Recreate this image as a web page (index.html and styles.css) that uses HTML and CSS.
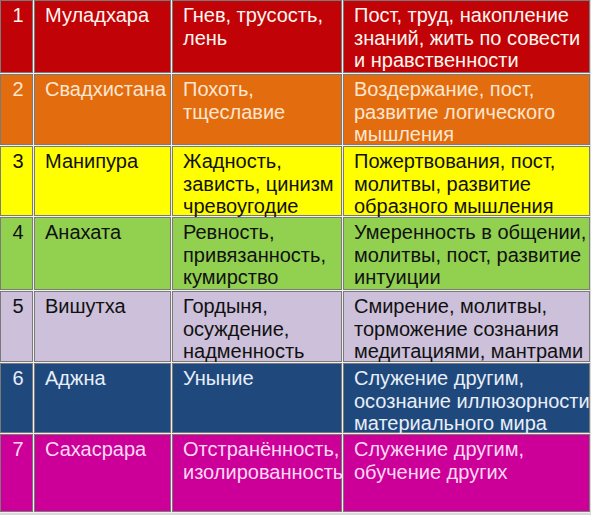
FILE: index.html
```html
<!DOCTYPE html>
<html lang="ru">
<head>
<meta charset="utf-8">
<title>Чакры</title>
<link rel="stylesheet" href="styles.css">
</head>
<body>
<div class="table">
  <div class="cell num r1">1</div>
  <div class="cell r1">Муладхара</div>
  <div class="cell r1">Гнев, трусость,<br>лень</div>
  <div class="cell r1">Пост, труд, накопление<br>знаний, жить по совести<br>и нравственности</div>

  <div class="cell num r2">2</div>
  <div class="cell r2">Свадхистана</div>
  <div class="cell r2">Похоть,<br>тщеславие</div>
  <div class="cell r2">Воздержание, пост,<br>развитие логического<br>мышления</div>

  <div class="cell num r3">3</div>
  <div class="cell r3">Манипура</div>
  <div class="cell r3">Жадность,<br>зависть, цинизм<br>чревоугодие</div>
  <div class="cell r3">Пожертвования, пост,<br>молитвы, развитие<br>образного мышления</div>

  <div class="cell num r4">4</div>
  <div class="cell r4">Анахата</div>
  <div class="cell r4">Ревность,<br>привязанность,<br>кумирство</div>
  <div class="cell r4">Умеренность в общении,<br>молитвы, пост, развитие<br>интуиции</div>

  <div class="cell num r5">5</div>
  <div class="cell r5">Вишутха</div>
  <div class="cell r5">Гордыня,<br>осуждение,<br>надменность</div>
  <div class="cell r5">Смирение, молитвы,<br>торможение сознания<br>медитациями, мантрами</div>

  <div class="cell num r6">6</div>
  <div class="cell r6">Аджна</div>
  <div class="cell r6">Уныние</div>
  <div class="cell r6">Служение другим,<br>осознание иллюзорности<br>материального мира</div>

  <div class="cell num r7">7</div>
  <div class="cell r7">Сахасрара</div>
  <div class="cell r7">Отстранённость,<br>изолированность</div>
  <div class="cell r7">Служение другим,<br>обучение других</div>
</div>
</body>
</html>
```
FILE: styles.css
```css
html, body {
  margin: 0;
  padding: 0;
}
body {
  background: #d9d9d9;
  width: 591px;
  height: 515px;
  overflow: hidden;
}
.table {
  display: grid;
  grid-template-columns: 33px 137px 170px 247px;
  grid-template-rows: 73px 71px 70px 73px 71px 70px 78px;
  gap: 1px;
  background: #f0f0f0;
  width: 590px;
  padding-bottom: 1px;
  font-family: "Liberation Sans", Arial, sans-serif;
  font-size: 20px;
  line-height: 22.5px;
}
.cell {
  box-sizing: border-box;
  border: 1px solid #7a7a7a;
  padding: 3px 2px 0 10px;
  white-space: nowrap;
  overflow: visible;
}
.num {
  padding: 3px 0 0 3px;
  text-align: center;
}
.r1 { background: #c10206; color: #fff6f0; }
.r2 { background: #e36c0f; color: #fde6cf; }
.r3 { background: #ffff00; color: #111; }
.r4 { background: #92d050; color: #111; }
.r5 { background: #ccc0da; color: #111; }
.r6 { background: #1f497d; color: #e8eef8; }
.r7 { background: #cc0099; color: #ffd9f3; }
```
